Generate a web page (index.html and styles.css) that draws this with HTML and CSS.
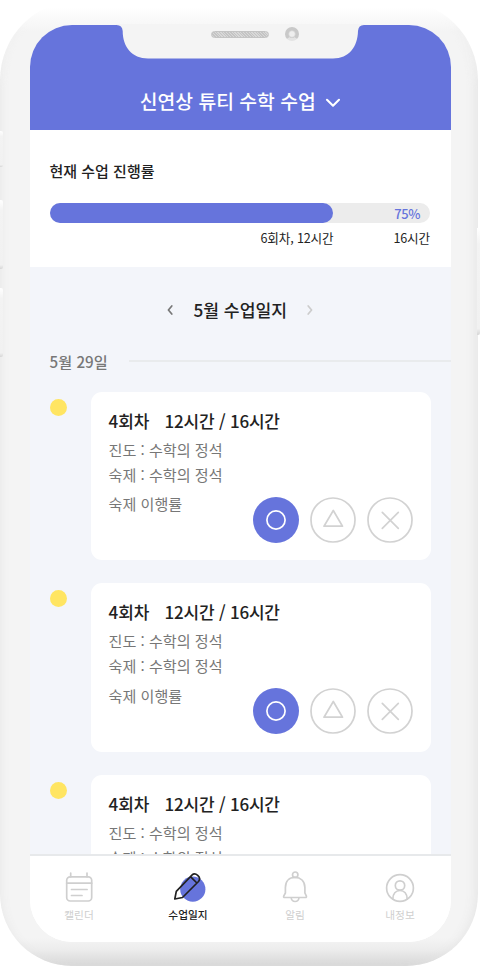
FILE: index.html
```html
<!DOCTYPE html>
<html lang="ko">
<head>
<meta charset="utf-8">
<title>수업일지</title>
<link rel="stylesheet" href="styles.css">
</head>
<body>
<svg class="defs" width="0" height="0">
  <symbol id="circle" viewBox="0 0 46 46"><circle cx="23" cy="23" r="9.1"/></symbol>
  <symbol id="triangle" viewBox="0 0 46 46"><circle cx="23" cy="23" r="22"/><path d="M23.3 13.5 32.5 29.2H14Z"/></symbol>
  <symbol id="cross" viewBox="0 0 46 46"><circle cx="23" cy="23" r="22"/><path d="M15.3 15.3 31.3 31.3M31.3 15.3 15.3 31.3"/></symbol>
</svg>
<div class="side-key key-mute"></div>
<div class="side-key key-up"></div>
<div class="side-key key-down"></div>
<div class="side-key key-power"></div>
<div class="phone">
  <main class="screen">
    <header class="header">
      <h1 class="header-title">신연상 튜티 수학 수업</h1>
      <svg class="chevron" width="16" height="10" viewBox="0 0 16 10"><path d="M2 1.8 8 7.7 14 1.8"/></svg>
    </header>
    <section class="progress">
      <h2 class="progress-title">현재 수업 진행률</h2>
      <div class="track"><div class="fill"></div><span class="percent">75%</span></div>
      <div class="labels"><span class="current">6회차, 12시간</span><span>16시간</span></div>
    </section>
    <section class="diary">
      <div class="month">
        <svg width="8" height="12" viewBox="0 0 8 12"><path d="M5.8 2 2.4 6 5.8 10"/></svg>
        <h2 class="month-title">5월 수업일지</h2>
        <svg class="next" width="8" height="12" viewBox="0 0 8 12"><path d="M2.2 2 5.6 6 2.2 10"/></svg>
      </div>
      <div class="date"><span class="date-text">5월 29일</span><i class="date-line"></i></div>
      <article class="entry">
        <i class="dot"></i>
        <div class="card">
          <h3 class="card-title"><span>4회차</span><span class="hours">12시간 / 16시간</span></h3>
          <p>진도 : 수학의 정석</p>
          <p>숙제 : 수학의 정석</p>
          <div class="rate">
            <p>숙제 이행률</p>
            <div class="marks">
              <svg class="mark selected"><use href="#circle"/></svg>
              <svg class="mark"><use href="#triangle"/></svg>
              <svg class="mark"><use href="#cross"/></svg>
            </div>
          </div>
        </div>
      </article>
      <article class="entry">
        <i class="dot"></i>
        <div class="card">
          <h3 class="card-title"><span>4회차</span><span class="hours">12시간 / 16시간</span></h3>
          <p>진도 : 수학의 정석</p>
          <p>숙제 : 수학의 정석</p>
          <div class="rate">
            <p>숙제 이행률</p>
            <div class="marks">
              <svg class="mark selected"><use href="#circle"/></svg>
              <svg class="mark"><use href="#triangle"/></svg>
              <svg class="mark"><use href="#cross"/></svg>
            </div>
          </div>
        </div>
      </article>
      <article class="entry">
        <i class="dot"></i>
        <div class="card">
          <h3 class="card-title"><span>4회차</span><span class="hours">12시간 / 16시간</span></h3>
          <p>진도 : 수학의 정석</p>
          <p>숙제 : 수학의 정석</p>
        </div>
      </article>
    </section>
    <nav class="tabs">
      <a class="tab">
        <svg width="36" height="34" viewBox="0 0 36 34"><rect x="5.7" y="6.8" width="25" height="24.2" rx="3.5"/><path d="M9.7 3v3.8M26 3v3.8M5.7 13.2h25M10.5 19.5h15.6M10.5 25.5h10.5"/></svg>
        <span>캘린더</span>
      </a>
      <a class="tab active">
        <svg width="36" height="34" viewBox="0 0 36 34"><circle class="spot" cx="22.8" cy="19.2" r="12.6"/><path class="tip" d="M4.8 29 6.3 21.3 12.5 27.5Z"/><path d="M4.8 29 6.3 21.3 21.9 5.2Q24.5 2.7 27.7 5.3 31.1 8.5 28.5 11.5L12.5 27.5ZM20.7 6.8 26.9 13"/></svg>
        <span>수업일지</span>
      </a>
      <a class="tab">
        <svg width="36" height="34" viewBox="0 0 36 34"><path d="M8.4 17.5C8.4 11 12.4 7.4 18 7.4S27.9 11 27.9 17.5V23L29.4 26.2Q29.6 27.5 28.5 27.5H7.7Q6.3 27.5 6.7 26.2L8.4 23ZM14.2 27.5a3.9 4 0 0 0 7.8 0"/><circle cx="18.2" cy="4.7" r="2.7"/></svg>
        <span>알림</span>
      </a>
      <a class="tab">
        <svg width="36" height="34" viewBox="0 0 36 34"><circle cx="18" cy="18" r="13.4"/><circle cx="18" cy="15.5" r="4.7"/><path d="M10.8 29C11 24 13.6 20.5 18 20.5S25 24 25.2 29"/></svg>
        <span>내정보</span>
      </a>
    </nav>
  </main>
  <svg class="notch" width="260" height="40" viewBox="0 0 260 40"><path d="M6 4V5H6.5Q12.3 5 12.7 11C12.7 27 22 38.5 38 38.5H223C239 38.5 247.6 27 248 11Q248.4 5 254 5V4Z"/></svg>
  <div class="speaker"></div>
  <div class="camera"></div>
</div>
</body>
</html>
```
FILE: styles.css
```css
* { box-sizing: border-box; margin: 0; padding: 0; }
body {
  position: relative;
  width: 480px;
  height: 966px;
  overflow: hidden;
  background: #fff;
  font-family: "Noto Sans CJK KR", sans-serif;
  color: #222;
}
h1, h2, h3 { font-weight: 500; white-space: nowrap; }
svg { display: block; flex: none; fill: none; stroke: currentColor; stroke-linecap: round; stroke-linejoin: round; }
.defs { position: absolute; }
.phone {
  position: relative;
  width: 478px;
  height: 966px;
  padding: 25px 27px 24px 29.5px;
  border-radius: 80px 80px 72px 72px;
  background: linear-gradient(#fff 8px, #fafafa 18px, #f4f4f4 32px, #f4f4f4 938px, #ececec 950px, #d6d6d6 966px);
}
.phone::before {
  content: "";
  position: absolute;
  inset: 0;
  border-radius: inherit;
  box-shadow: inset 6px 0 12px -7px #e4e4e4, inset -8px 0 12px -6px #e4e4e4;
  -webkit-mask-image: linear-gradient(transparent 20px, #000 90px);
  mask-image: linear-gradient(transparent 20px, #000 90px);
}
.side-key { position: absolute; z-index: 1; left: 0; width: 3px; border-radius: 0 2px 2px 0; background: linear-gradient(#fff, #f3f3f3 15%, #f1f1f1 94%, #d6d6d6); }
.key-mute { top: 131px; height: 36px; }
.key-up { top: 200px; height: 69px; }
.key-down { top: 288px; height: 69px; }
.key-power { left: 477px; top: 228px; height: 107px; }
.screen { position: relative; display: flex; flex-direction: column; height: 917px; border-radius: 42px; overflow: hidden; background: #fff; }
.header {
  display: flex;
  flex: none;
  justify-content: center;
  height: 104.5px;
  padding-top: 62px;
  background: #6674dc;
  color: #fff;
}
.header-title { font-size: 19.3px; line-height: 28px; }
.chevron { margin: 11px 0 0 9px; stroke-width: 2.1; }
.progress { flex: none; height: 137.5px; padding: 29px 21px 0 20px; background: #fff; }
.progress-title { font-size: 15px; line-height: 24px; }
.track { display: flex; align-items: center; justify-content: space-between; height: 19.5px; margin-top: 20.5px; padding-right: 10px; border-radius: 10px; background: #ececec; }
.fill { width: 283.5px; height: 100%; border-radius: 10px; background: #6674dc; }
.percent { color: #6674dc; font-size: 13px; font-weight: 500; letter-spacing: -.4px; line-height: 20px; padding-top: 2px; }
.labels { display: flex; justify-content: space-between; margin-top: 5px; font-size: 12.6px; line-height: 20px; letter-spacing: -.15px; }
.current { width: 284px; text-align: right; }
.diary { flex: 1; min-height: 0; overflow: hidden; padding-left: 20px; background: #f3f5fa; }
.month { display: flex; align-items: center; justify-content: center; gap: 19px; height: 28px; margin: 29px 20px 0 0; color: #777; stroke-width: 1.7; }
.month-title { font-size: 17.2px; line-height: 28px; color: #222; }
.next { color: #ccc; }
.date { display: flex; align-items: center; gap: 21px; height: 24px; margin-top: 25px; }
.date-text { font-size: 15.2px; font-weight: 500; line-height: 24px; color: #777; }
.date-line { flex: 1; height: 2px; background: #e9ebed; }
.entry { display: flex; justify-content: space-between; height: 168.8px; margin: 18.5px 20.5px 0 0; }
.entry + .entry { margin-top: 23px; }
.dot { width: 17px; height: 17px; margin-top: 7px; border-radius: 50%; background: #ffe562; }
.card { width: 340px; height: 168.8px; padding: 16px 18px 0; border-radius: 11px; background: #fff; color: #777; font-size: 15.1px; line-height: 25px; white-space: nowrap; }
.card-title { display: flex; gap: 15px; font-size: 17px; line-height: 25px; margin-bottom: 4px; color: #222; }
.hours { letter-spacing: -.2px; }
.rate { display: flex; justify-content: space-between; margin-top: 4.5px; }
.marks { display: flex; gap: 11px; margin-top: 5.5px; }
.mark { width: 46px; height: 46px; color: #d2d2d2; stroke-width: 1.7; }
.selected { border-radius: 50%; background: #6674dc; color: #fff; }
.tabs { display: flex; flex: none; justify-content: space-between; height: 88px; padding: 14px 25px 0 23.5px; border-top: 2px solid #e7e9eb; background: #fff; }
.tab { display: flex; flex-direction: column; align-items: center; width: 52px; color: #cfcfcf; font-size: 10.7px; line-height: 15px; stroke-width: 1.7; }
.tab:nth-child(2), .tab:nth-child(3) { margin-left: 2px; margin-right: -2px; }
.tab span { margin-top: 3px; }
.active { color: #222; font-weight: 500; }
.spot { fill: #6674dc; stroke: none; }
.tip { fill: #fff; stroke: none; }
.notch { position: absolute; left: 110px; top: 20px; fill: #f4f4f4; stroke: none; }
.speaker { position: absolute; left: 211px; top: 31px; width: 58px; height: 7px; border: 1px solid #c4c4c4; border-radius: 4px; background: repeating-linear-gradient(45deg, #c4c4c4 0 1px, #d8d8d8 1px 2px); }
.camera { position: absolute; left: 285px; top: 26.5px; width: 14px; height: 14px; border: 3px solid #c9c9c9; border-bottom-color: #e4e4e4; border-radius: 50%; background: radial-gradient(#eee 40%, #c9c9c9 70%); }
```
